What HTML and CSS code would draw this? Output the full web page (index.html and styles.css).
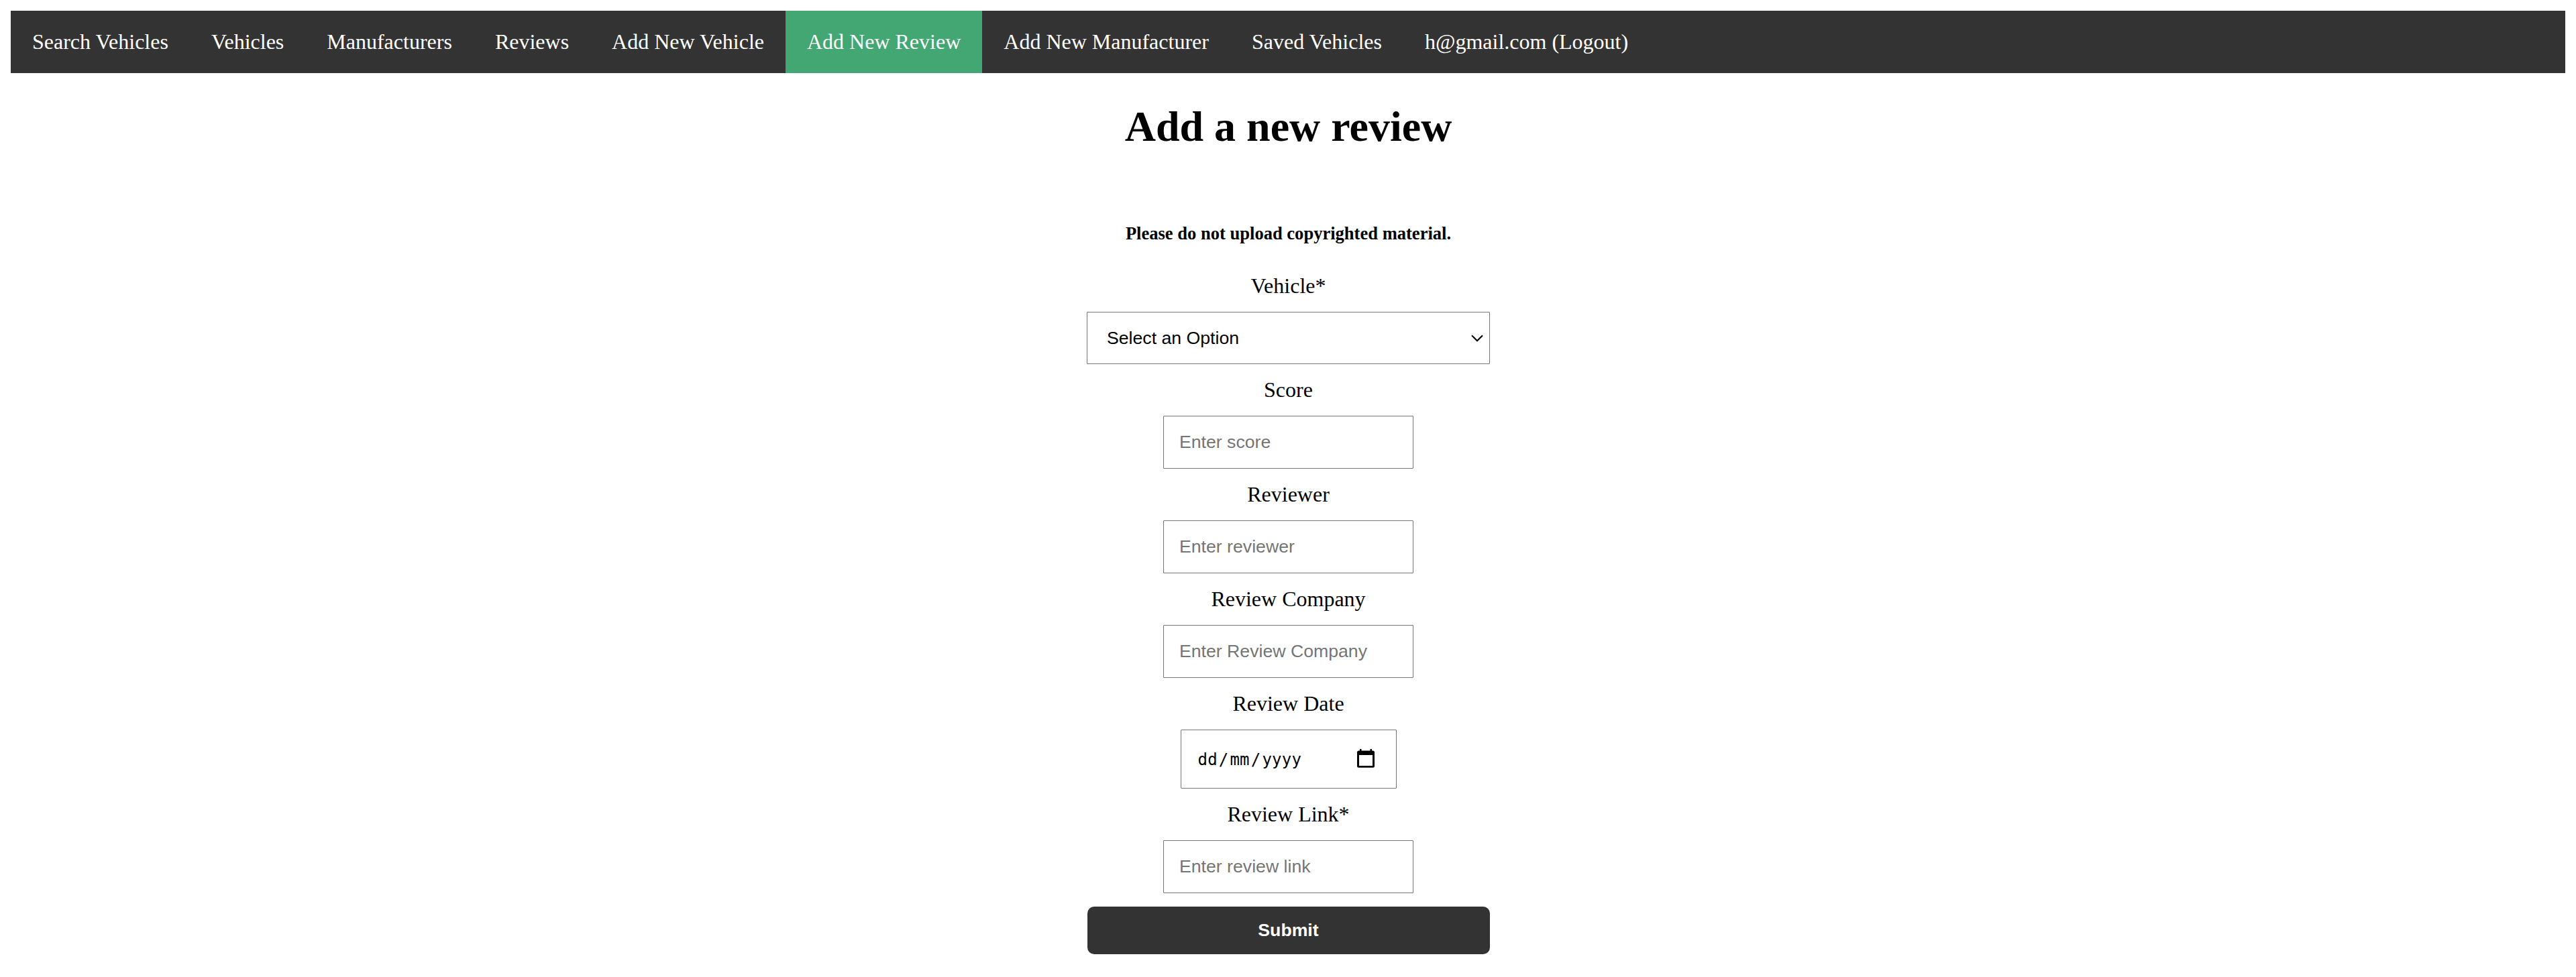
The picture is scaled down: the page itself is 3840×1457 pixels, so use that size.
FILE: index.html
```html
<!DOCTYPE html>
<html lang="en">
<head>
<meta charset="utf-8">
<title>Add a new review</title>
<link rel="stylesheet" href="styles.css">
</head>
<body>
<nav class="navbar">
  <a class="nav-link">Search Vehicles</a>
  <a class="nav-link">Vehicles</a>
  <a class="nav-link">Manufacturers</a>
  <a class="nav-link">Reviews</a>
  <a class="nav-link">Add New Vehicle</a>
  <a class="nav-link active">Add New Review</a>
  <a class="nav-link">Add New Manufacturer</a>
  <a class="nav-link">Saved Vehicles</a>
  <a class="nav-link">h@gmail.com (Logout)</a>
</nav>
<main class="page">
  <h1 class="title">Add a new review</h1>
  <h5 class="notice">Please do not upload copyrighted material.</h5>
  <form class="form">
    <label class="label" for="vehicle">Vehicle*</label>
    <div class="select-wrap">
      <select class="select" id="vehicle"><option>Select an Option</option></select>
      <svg class="chevron" width="18" height="11" viewBox="0 0 18 11"><path d="M1 1.200 9 9.200 17 1.200" fill="none" stroke="#000" stroke-width="2.200"/></svg>
    </div>
    <label class="label" for="score">Score</label>
    <input class="input" id="score" placeholder="Enter score">
    <label class="label" for="reviewer">Reviewer</label>
    <input class="input" id="reviewer" placeholder="Enter reviewer">
    <label class="label" for="company">Review Company</label>
    <input class="input" id="company" placeholder="Enter Review Company">
    <label class="label">Review Date</label>
    <div class="date">
      <span class="date-text"><span>dd</span><span>/</span><span>mm</span><span>/</span><span>yyyy</span></span>
      <svg class="calendar" width="26" height="28" viewBox="0 0 26 28"><path fill="#000" fill-rule="evenodd" d="M4 0H6.500V2.500H19.500V0H22V2.500H23.500Q26 2.500 26 5V25.200Q26 27.700 23.500 27.700H2.500Q0 27.700 0 25.200V5Q0 2.500 2.500 2.500H4ZM3 9V25H23V9Z"/></svg>
    </div>
    <label class="label" for="link">Review Link*</label>
    <input class="input" id="link" placeholder="Enter review link">
    <button class="submit" type="button">Submit</button>
  </form>
</main>
</body>
</html>
```
FILE: styles.css
```css
body {
  margin: 16px;
  background: #fff;
  color: #000;
  font: 32px/37px "Liberation Serif", "Times New Roman", serif;
}
.navbar {
  display: flex;
  height: 93px;
  background: #333;
}
.nav-link {
  padding: 28px 32px;
  color: #fff;
  white-space: nowrap;
}
.nav-link.active { background: #42a772; }
.page {
  display: flex;
  flex-direction: column;
  align-items: center;
  padding-left: 1px;
}
.title {
  margin: 43px 0 0;
  font-size: 64px;
  line-height: 74px;
}
.notice {
  margin: 107px 0 0;
  font-size: 26.56px;
  line-height: 30px;
}
.form {
  display: flex;
  flex-direction: column;
  align-items: center;
  margin-top: 45px;
}
.label { margin-bottom: 20px; }
.select-wrap {
  display: grid;
  grid-template-columns: 601px;
  align-items: center;
  height: 78px;
  margin-bottom: 20px;
}
.select, .chevron { grid-area: 1 / 1; }
.chevron {
  justify-self: end;
  margin-right: 10px;
  pointer-events: none;
}
.select, .input, .date {
  box-sizing: border-box;
  border: 1px solid #767676;
  border-radius: 1px;
  background: #fff;
}
.select {
  appearance: none;
  width: 601px;
  height: 78px;
  padding: 0 29px;
  color: #000;
  font: 26.67px "Liberation Sans", Arial, sans-serif;
}
.input {
  width: 373px;
  height: 79px;
  margin: 0 0 20px;
  padding: 0 23px;
  font: 26.67px "Liberation Sans", Arial, sans-serif;
}
.input::placeholder { color: #757575; }
.date {
  display: flex;
  align-items: center;
  justify-content: space-between;
  width: 322px;
  height: 88px;
  margin-bottom: 20px;
  padding: 0 32px 0 25px;
}
.calendar { margin-bottom: 2px; }
.date-text {
  display: flex;
  gap: 2px;
  padding-top: 2px;
  font: 24px "DejaVu Sans Mono", monospace;
  letter-spacing: 0.2px;
}
.submit {
  width: 600px;
  height: 71px;
  border: 0;
  border-radius: 10px;
  background: #333;
  color: #fff;
  font: bold 26.67px "Liberation Sans", Arial, sans-serif;
}
```
